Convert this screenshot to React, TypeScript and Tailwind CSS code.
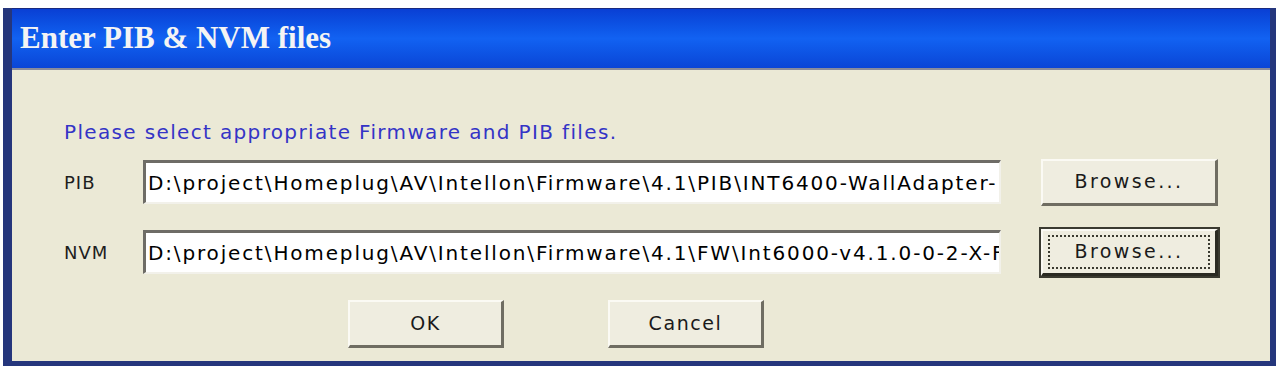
import type { FC, ReactNode } from "react";

const ui = { fontFamily: '"DejaVu Sans", "Liberation Sans", sans-serif' };

interface BtnProps {
  children?: ReactNode;
  focused?: boolean;
  className?: string;
}

const XpButton: FC<BtnProps> = ({ children, focused, className = "" }) => (
  <div
    className={`flex items-center justify-center bg-[#efede0] text-[19px] text-[#1a1a1a] border-t-2 border-l-2 border-t-[#fbfaf4] border-l-[#fbfaf4] border-b-[3px] border-r-[3px] ${
      focused ? "border-b-[#2a2a22] border-r-[#2a2a22] outline-2 outline-[#3a3a30]" : "border-b-[#6f6d62] border-r-[#6f6d62]"
    } ${className}`}
  >
    {focused ? (
      <div className="flex h-[calc(100%-8px)] w-[calc(100%-10px)] items-center justify-center border-2 border-dotted border-[#3a3a30]">
        {children}
      </div>
    ) : (
      children
    )}
  </div>
);

interface RowProps {
  label: string;
  value: string;
  focused?: boolean;
}

const FileRow: FC<RowProps> = ({ label, value, focused }) => (
  <div className="flex h-[48px] items-center">
    <div className="w-[79px] text-[18px] tracking-[1px] text-[#1e1e1e]">{label}</div>
    <div className="flex h-[44px] w-[858px] items-center overflow-hidden whitespace-nowrap border-t-[3px] border-l-[3px] border-t-[#6e6c66] border-l-[#6e6c66] border-b-2 border-r-2 border-b-[#f2f1ea] border-r-[#f2f1ea] bg-white pl-[2px] text-[20px] tracking-[1.85px] text-black">
      <span className="min-w-0 overflow-hidden">{value}</span>
    </div>
    <XpButton focused={focused} className="ml-[40px] h-[47px] w-[177px] tracking-[2.4px]">
      Browse...
    </XpButton>
  </div>
);

const App: FC = () => {
  return (
    <div className="h-[370px] w-[1279px] bg-white pt-[8px] pl-[3px]" style={ui}>
      <div className="flex h-[358px] w-[1273px] flex-col border-x-[9px] border-b-[5px] border-l-[#25367c] border-r-[#25367c] border-b-[#25367c] border-r-[6px] bg-[#ebe9d6]">
        <div className="flex h-[60px] items-center border-t border-t-[#1a2a80] bg-gradient-to-b from-[#0a3fd4] via-[#1262f2] to-[#0b45d6] pl-[8px]">
          <span
            className="text-[31px] font-bold text-[#f4f4f4]"
            style={{ fontFamily: '"Liberation Serif", serif' }}
          >
            Enter PIB &amp; NVM files
          </span>
        </div>
        <div className="flex flex-1 flex-col border-t-2 border-t-[#8a8c9c] pl-[52px] pt-[51px]">
          <div className="h-[22px] text-[20px] leading-[22px] tracking-[1.35px] text-[#3434c6]">
            Please select appropriate Firmware and PIB files.
          </div>
          <div className="mt-[15px] flex flex-col gap-[22px]">
            <FileRow
              label="PIB"
              value="D:\project\Homeplug\AV\Intellon\Firmware\4.1\PIB\INT6400-WallAdapter-"
            />
            <FileRow
              label="NVM"
              value="D:\project\Homeplug\AV\Intellon\Firmware\4.1\FW\Int6000-v4.1.0-0-2-X-F"
              focused
            />
          </div>
          <div className="mt-[24px] flex gap-[104px] pl-[284px]">
            <XpButton className="h-[48px] w-[156px] tracking-[1.6px]">OK</XpButton>
            <XpButton className="h-[48px] w-[156px] tracking-[1.6px]">Cancel</XpButton>
          </div>
        </div>
      </div>
    </div>
  );
};

export default App;
